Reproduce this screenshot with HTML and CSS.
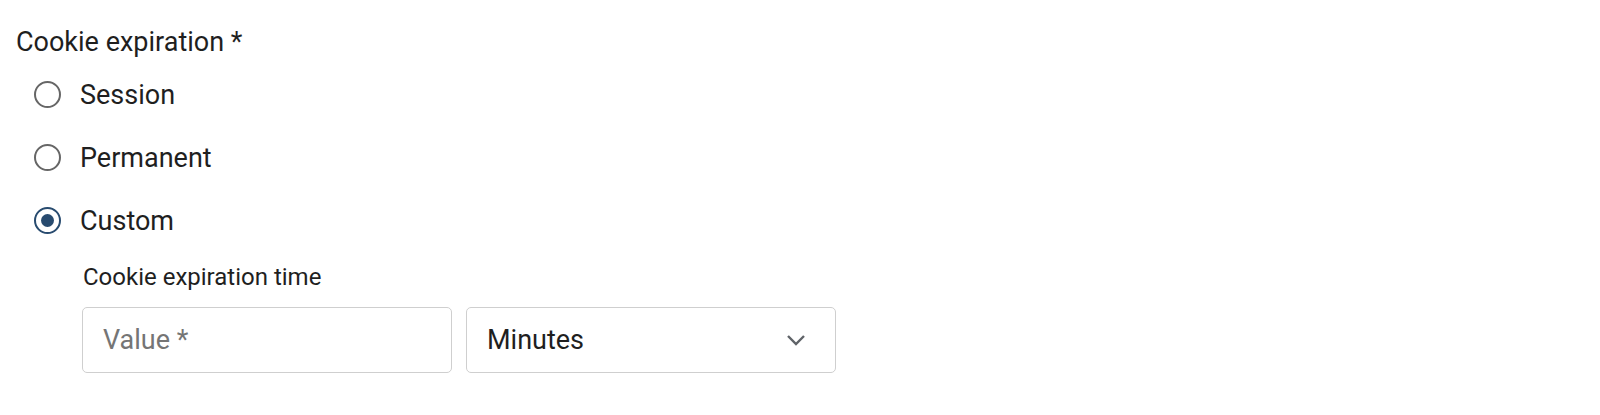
FILE: index.html
```html
<!DOCTYPE html>
<html>
<head>
<meta charset="utf-8">
<link rel="stylesheet" href="styles.css">
</head>
<body>
<div class="field">
  <div class="title">Cookie expiration *</div>
  <div class="radios">
    <div class="radio-row"><span class="radio"></span><span class="radio-label">Session</span></div>
    <div class="radio-row"><span class="radio"></span><span class="radio-label">Permanent</span></div>
    <div class="radio-row"><span class="radio checked"></span><span class="radio-label">Custom</span></div>
  </div>
  <div class="custom">
    <div class="sub-title">Cookie expiration time</div>
    <div class="inputs">
      <div class="box"><span class="placeholder">Value *</span></div>
      <div class="box select"><span class="value">Minutes</span>
        <svg class="chev" width="20" height="12" viewBox="0 0 20 12"><path d="M2 2 L10 10 L18 2" fill="none" stroke="#5f6368" stroke-width="2.4"/></svg>
      </div>
    </div>
  </div>
</div>
</body>
</html>
```

FILE: styles.css
```css
html, body { margin: 0; padding: 0; background: #fff; }
body { font-family: Roboto, "Noto Sans", sans-serif; color: #1f1f1f; width: 1600px; height: 415px; overflow: hidden; }
.field { padding: 27px 0 0 16px; }
.title { font-size: 27px; line-height: 30px; height: 30px; }
.radios { display: flex; flex-direction: column; padding-left: 18px; margin-top: 6px; }
.radio-row { display: flex; align-items: center; height: 63px; }
.radio { width: 27px; height: 27px; box-sizing: border-box; border: 2.2px solid #666; border-radius: 50%; display: flex; align-items: center; justify-content: center; }
.radio.checked { border-color: #284b6f; }
.radio.checked::after { content: ""; width: 13px; height: 13px; border-radius: 50%; background: #284b6f; }
.radio-label { font-size: 27px; margin-left: 19px; }
.custom { padding-left: 67px; margin-top: 12px; }
.sub-title { font-size: 24px; line-height: 26px; }
.inputs { display: flex; gap: 14px; margin-top: 17px; margin-left: -1px; }
.box { width: 370px; height: 66px; box-sizing: border-box; border: 1.5px solid #cfcfcf; border-radius: 5px; display: flex; align-items: center; padding: 0 20px; font-size: 27px; }
.placeholder { color: #757575; }
.select { justify-content: space-between; }
.value { color: #1f1f1f; }
.chev { margin-right: 9px; }
```
